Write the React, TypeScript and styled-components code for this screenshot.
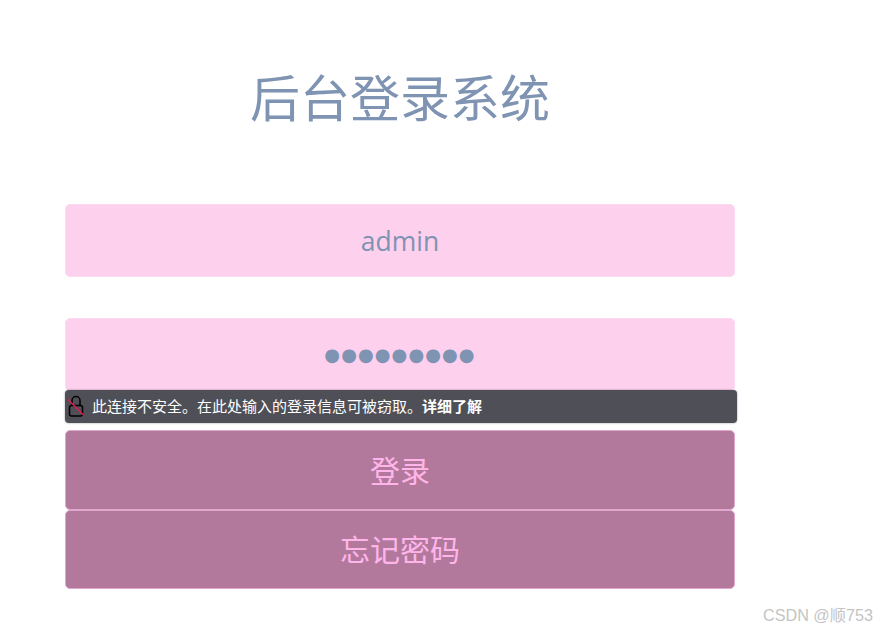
import styled, { createGlobalStyle } from "styled-components";

const GlobalStyle = createGlobalStyle`
  html, body {
    margin: 0;
    padding: 0;
    background: #fff;
  }
`;

const CJK = `"Open Sans", "Noto Sans CJK SC", sans-serif`;

export default function App() {
  return (
    <Page>
      <GlobalStyle />
      <Form>
        <Title>后台登录系统</Title>
        <Field type="text" value="admin" readOnly />
        <PasswordRow>
          <Field type="text" value="●●●●●●●●●" readOnly $dots />
          <Warning>
            <LockIcon viewBox="0 0 18 24" width="18" height="24">
              <path d="M5 10.5V5.5a4 4 0 0 1 8 0V10.5" fill="none" stroke="#000" strokeWidth="1.5" />
              <rect x="2.5" y="10.5" width="13" height="10.5" rx="2" fill="none" stroke="#000" strokeWidth="1.5" />
              <line x1="1" y1="4.5" x2="17" y2="20.5" stroke="#e0194f" strokeWidth="1.4" />
            </LockIcon>
            <WarningText>
              此连接不安全。在此处输入的登录信息可被窃取。<strong>详细了解</strong>
            </WarningText>
          </Warning>
        </PasswordRow>
        <Actions>
          <Button>登录</Button>
          <Button>忘记密码</Button>
        </Actions>
      </Form>
      <Watermark>CSDN @顺753</Watermark>
    </Page>
  );
}

const Page = styled.div`
  position: relative;
  width: 876px;
  height: 630px;
  overflow: hidden;
  font-family: ${CJK};
`;

const Form = styled.div`
  width: 670px;
  padding-top: 64px;
  margin-left: 65px;
  display: flex;
  flex-direction: column;
`;

const Title = styled.h1`
  margin: 0 0 64px;
  height: 76px;
  line-height: 62px;
  text-align: center;
  font-size: 50px;
  font-weight: 400;
  color: #7f93b2;
  font-family: "Noto Sans CJK SC", sans-serif;
`;

const Field = styled.input<{ $dots?: boolean }>`
  display: block;
  box-sizing: border-box;
  width: 670px;
  height: 73px;
  padding: 0;
  border: 1px solid #fdd9f2;
  border-radius: 5px;
  outline: none;
  background: #fdd0ee;
  text-align: center;
  font-family: ${({ $dots }) => ($dots ? `"DejaVu Sans", sans-serif` : CJK)};
  font-size: ${({ $dots }) => ($dots ? "18px" : "26.5px")};
  letter-spacing: ${({ $dots }) => ($dots ? "1.1px" : "0")};
  color: #7f93b2;
`;

const PasswordRow = styled.div`
  position: relative;
  margin-top: 41px;
`;

const Warning = styled.div`
  position: absolute;
  left: 0;
  top: 72px;
  width: 672px;
  height: 33px;
  box-sizing: border-box;
  display: flex;
  align-items: center;
  gap: 7px;
  padding-left: 2px;
  border-radius: 4px;
  background: #4f4f57;
  box-shadow: 0 0 2px rgba(0, 0, 0, 0.45);
  color: #fff;
  font-size: 15px;
  font-family: "Noto Sans CJK SC", sans-serif;

  strong {
    font-weight: 700;
  }
`;

const WarningText = styled.span`
  position: relative;
  top: -1px;
`;

const LockIcon = styled.svg`
  flex: none;
`;

const Actions = styled.div`
  margin-top: 39px;
  display: flex;
  flex-direction: column;
`;

const Button = styled.button`
  box-sizing: border-box;
  width: 670px;
  height: 79.5px;
  padding: 0 0 2px;
  border: 1px solid #e0a6cc;
  border-radius: 5px;
  background: #b3799c;
  color: #fdb5ea;
  font-size: 30px;
  font-family: "Noto Sans CJK SC", sans-serif;
`;

const Watermark = styled.div`
  position: absolute;
  right: 3px;
  top: 604px;
  font-family: "Liberation Sans", "Noto Sans CJK SC", sans-serif;
  font-size: 16.2px;
  line-height: 22px;
  color: #c4c4c4;
`;
